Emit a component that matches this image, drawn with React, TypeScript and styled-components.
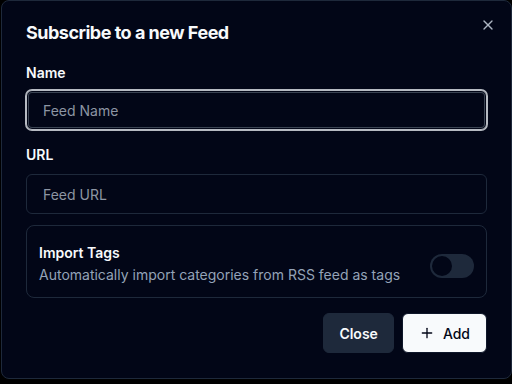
import React from "react";
import styled, { createGlobalStyle } from "styled-components";

const Global = createGlobalStyle`
  html, body { margin: 0; padding: 0; background: #000; }
  body { font-family: Inter, "Noto Sans", "Liberation Sans", sans-serif; -webkit-font-smoothing: antialiased; }
  * { box-sizing: border-box; }
`;

const Dialog = styled.div`
  position: relative;
  margin-left: 1px;
  width: 511px;
  height: 379px;
  background: #020617;
  border: 1px solid #1e293b;
  border-radius: 8px;
  padding: 23px 24px 24px;
  display: flex;
  flex-direction: column;
  color: #f8fafc;
`;

const Title = styled.h2`
  margin: 0;
  font-size: 18px;
  line-height: 18px;
  font-weight: 700;
  letter-spacing: -0.5px;
  color: #f8fafc;
`;

const CloseX = styled.button`
  position: absolute;
  right: 15px;
  top: 16px;
  width: 16px;
  height: 16px;
  padding: 0;
  border: none;
  background: transparent;
  color: #cbd5e1;
  opacity: 0.85;
  display: flex;
  align-items: center;
  justify-content: center;
`;

const Label = styled.label<{ $top: number }>`
  display: block;
  margin-top: ${(p) => p.$top}px;
  font-size: 14px;
  line-height: 14px;
  font-weight: 600;
  color: #f8fafc;
`;

const Input = styled.input<{ $focused?: boolean; $top: number }>`
  display: block;
  width: 100%;
  height: 40px;
  margin-top: ${(p) => p.$top}px;
  padding: 0 16px;
  border-radius: 6px;
  background: #020617;
  font-family: inherit;
  font-size: 14px;
  color: #f8fafc;
  outline: none;
  border: 1px solid ${(p) => (p.$focused ? "#b6bac2" : "#1e293b")};
  box-shadow: ${(p) =>
    p.$focused
      ? "0 0 0 1px #b6bac2, inset 0 0 0 1px #020617, inset 0 0 0 2px #3a4352"
      : "none"};
  &::placeholder { color: #8d95a3; }
`;

const TagsBox = styled.div`
  margin-top: 11px;
  border: 1px solid #1e293b;
  border-radius: 8px;
  padding: 17px 12px 12px;
  display: flex;
  align-items: center;
  justify-content: space-between;
`;

const TagsText = styled.div`
  display: flex;
  flex-direction: column;
`;

const TagsTitle = styled.div`
  font-size: 14px;
  line-height: 20px;
  font-weight: 600;
  color: #f8fafc;
`;

const TagsDesc = styled.div`
  margin-top: 2px;
  font-size: 14px;
  line-height: 20px;
  color: #94a3b8;
`;

const SwitchTrack = styled.button`
  margin-top: 4px;
  width: 44px;
  height: 24px;
  border-radius: 12px;
  border: 2px solid transparent;
  background: #1e293b;
  padding: 0;
  display: flex;
  align-items: center;
`;

const SwitchThumb = styled.span`
  width: 20px;
  height: 20px;
  border-radius: 50%;
  background: #020617;
  display: block;
`;

const Footer = styled.div`
  margin-top: 15px;
  display: flex;
  justify-content: flex-end;
  gap: 8px;
`;

const Button = styled.button<{ $primary?: boolean }>`
  height: 40px;
  padding: 0 ${(p) => (p.$primary ? 16 : 15)}px;
  border-radius: 6px;
  font-family: inherit;
  font-size: 14px;
  display: flex;
  align-items: center;
  gap: 8px;
  cursor: pointer;
  border: 1px solid ${(p) => (p.$primary ? "#0f172a" : "#1e293b")};
  background: ${(p) => (p.$primary ? "#f8fafc" : "#1e293b")};
  color: ${(p) => (p.$primary ? "#020617" : "#f8fafc")};
  font-weight: ${(p) => (p.$primary ? 500 : 600)};
`;

export default function App() {
  return (
    <>
      <Global />
      <Dialog>
        <Title>Subscribe to a new Feed</Title>
        <CloseX aria-label="Close">
          <svg width="16" height="16" viewBox="0 0 24 24" fill="none" stroke="currentColor" strokeWidth="2" strokeLinecap="round" strokeLinejoin="round">
            <path d="M18 6 6 18" />
            <path d="m6 6 12 12" />
          </svg>
        </CloseX>
        <Label $top={24}>Name</Label>
        <Input $focused $top={10} placeholder="Feed Name" />
        <Label $top={18}>URL</Label>
        <Input $top={12} placeholder="Feed URL" />
        <TagsBox>
          <TagsText>
            <TagsTitle>Import Tags</TagsTitle>
            <TagsDesc>Automatically import categories from RSS feed as tags</TagsDesc>
          </TagsText>
          <SwitchTrack aria-label="Import Tags">
            <SwitchThumb />
          </SwitchTrack>
        </TagsBox>
        <Footer>
          <Button>Close</Button>
          <Button $primary>
            <svg width="16" height="16" viewBox="0 0 24 24" fill="none" stroke="currentColor" strokeWidth="2" strokeLinecap="round" strokeLinejoin="round">
              <path d="M5 12h14" />
              <path d="M12 5v14" />
            </svg>
            Add
          </Button>
        </Footer>
      </Dialog>
    </>
  );
}
